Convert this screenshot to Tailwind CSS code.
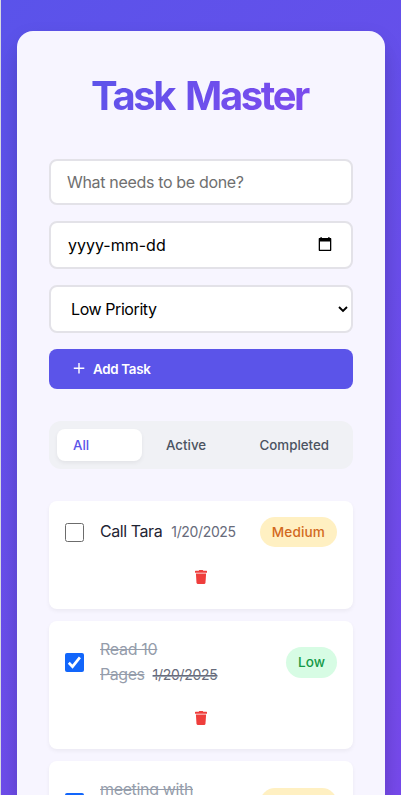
<!DOCTYPE html>
<html lang="en">
<head>
<meta charset="utf-8">
<title>Task Master</title>
<script src="https://cdn.jsdelivr.net/npm/@tailwindcss/browser@4"></script>
</head>
<body class="h-[795px] overflow-hidden border-l border-[#d5d8e0] bg-[linear-gradient(135deg,#5a53ea_0%,#774aeb_100%)] px-4 pt-[31px] font-['Inter','Liberation_Sans',sans-serif] text-base text-[#1f2433]">
<main class="h-[764px] w-[368px] overflow-hidden rounded-t-2xl bg-[#f7f5ff] px-8 pt-8 shadow-[0_20px_25px_-5px_rgba(0,0,0,0.12),0_8px_20px_rgba(0,0,0,0.1)]">
  <h1 class="flex h-16 items-center justify-center whitespace-nowrap pt-[2px] text-[40px] font-bold tracking-[-2.4px]"><span class="bg-[linear-gradient(135deg,#5b54ea,#7f4aee)] bg-clip-text pr-[3px] text-transparent [word-spacing:4px]">Task Master</span></h1>

  <form class="mt-8 flex flex-col gap-4">
    <div class="flex h-[46px] items-center rounded-lg border-2 border-[#e3e2e8] bg-white px-4 tracking-[-0.33px] text-[#6f6f6f]">What needs to be done?</div>
    <div class="flex h-12 items-center justify-between rounded-lg border-2 border-[#e3e2e8] bg-white pr-[19px] pl-[17px] text-black">
      <span>yyyy-mm-dd</span>
      <svg class="-mt-[2px] h-[14px] w-[14px]" viewBox="0 0 14 14"><path fill="#000" fill-rule="evenodd" d="M2.500 0h1.200v1h6.600V0h1.200v1h.8c.7 0 1 .4 1 1v10.800c0 .8-.3 1.200-1 1.200H1.700c-.7 0-1-.4-1-1.200V2c0-.6.3-1 1-1h.8zM2 4.500v8.200h10V4.500z"/></svg>
    </div>
    <div class="flex h-12 items-center justify-between rounded-lg border-2 border-[#e3e2e8] bg-white pr-[3px] pl-5 text-black">
      <span class="tracking-[-0.42px]">Low Priority</span>
      <svg class="h-[10px] w-[10px]" viewBox="0 0 10 10"><path d="M1 3l4 4 4-4" fill="none" stroke="#000" stroke-width="1.900"/></svg>
    </div>
    <button type="button" class="flex h-10 items-center gap-2 rounded-lg bg-[#5b54e9] pt-px pl-6 text-[13.333px] font-semibold tracking-[-0.3px] text-white">
      <svg class="-mt-[4px] h-3 w-3" viewBox="0 0 12 12"><path d="M6 1v10.500M.800 6.200h10.500" fill="none" stroke="#fff" stroke-width="1.400"/></svg>
      Add Task
    </button>
  </form>

  <nav class="mt-8 flex h-12 gap-2 rounded-xl bg-[#f0f1f5] p-2 text-[13.333px] font-medium text-[#4b5361]">
    <div class="flex w-[85px] items-center rounded-lg bg-white pt-[2px] pl-4 text-[#5b54e9] shadow-[0_2px_4px_rgba(0,0,0,0.06)]">All</div>
    <div class="flex w-[85px] items-center pt-[2px] pl-4">Active</div>
    <div class="flex items-center pt-[2px] pl-[16.500px]">Completed</div>
  </nav>

  <ul class="mt-8 flex flex-col gap-3">
    <li class="h-[108px] shrink-0 rounded-lg bg-white px-4 pt-4 shadow-[0_2px_4px_rgba(0,0,0,0.05)]">
      <div class="flex h-[30px] items-center">
        <span class="h-[19px] w-[19px] shrink-0 rounded-[2.500px] border border-[#6c6c6c] bg-white"></span>
        <p class="-mt-[2px] ml-4 flex-1 leading-[25px] tracking-[-0.42px]">Call Tara<span class="ml-[9px] text-sm tracking-[-0.35px] text-[#676b7b]">1/20/2025</span></p>
        <span class="flex h-[30px] items-center rounded-full bg-[#fff0c2] px-3 text-[13.600px] font-medium tracking-[0.13px] text-[#d2691e]">Medium</span>
      </div>
      <svg class="mx-auto mt-[23px] h-[14px] w-3" viewBox="0 0 12 14"><path fill="#ef3e3c" d="M4.200 0h3.600l.5.8h3.200q.5 0 .5.500v1.500H0V1.300q0-.5.5-.5h3.200z"/><path fill="#ef3e3c" d="M.9 3.400h10.200l-.6 9.100q-.1 1.500-1.500 1.500H3q-1.400 0-1.500-1.500z"/></svg>
    </li>
    <li class="h-32 shrink-0 rounded-lg bg-white px-4 pt-4 shadow-[0_2px_4px_rgba(0,0,0,0.05)]">
      <div class="flex h-[51px] items-center">
        <svg class="h-[19px] w-[19px] shrink-0" viewBox="0 0 19 19"><rect width="19" height="19" rx="2" fill="#1266fb"/><path d="M3.800 9.800l3.700 3.800 7.400-9.300" fill="none" stroke="#fff" stroke-width="2.700"/></svg>
        <p class="-mt-[2px] ml-4 flex-1 leading-[25px] tracking-[-0.3px] text-[#959dab] line-through">Read 10<br><span class="tracking-[-0.45px]">Pages</span><span class="ml-2 text-sm tracking-[-0.3px] text-[#676b7b] line-through">1/20/2025</span></p>
        <span class="flex h-[31px] items-center rounded-full bg-[#d7fce4] px-3 text-[13.600px] font-medium text-[#149a47]">Low</span>
      </div>
      <svg class="mx-auto mt-[23px] h-[14px] w-3" viewBox="0 0 12 14"><path fill="#ef3e3c" d="M4.200 0h3.600l.5.8h3.200q.5 0 .5.500v1.500H0V1.300q0-.5.5-.5h3.200z"/><path fill="#ef3e3c" d="M.9 3.400h10.200l-.6 9.100q-.1 1.500-1.500 1.500H3q-1.400 0-1.500-1.500z"/></svg>
    </li>
    <li class="h-32 shrink-0 rounded-lg bg-white px-4 pt-4 shadow-[0_2px_4px_rgba(0,0,0,0.05)]">
      <div class="flex h-[51px] items-center">
        <svg class="h-[19px] w-[19px] shrink-0" viewBox="0 0 19 19"><rect width="19" height="19" rx="2" fill="#1266fb"/><path d="M3.800 9.800l3.700 3.800 7.400-9.300" fill="none" stroke="#fff" stroke-width="2.700"/></svg>
        <p class="-mt-[2px] ml-4 flex-1 leading-[25px] tracking-[-0.35px] text-[#959dab] line-through">meeting with<br>&nbsp;</p>
        <span class="flex h-[30px] items-center rounded-full bg-[#fff0c2] px-3 text-[13.600px] font-medium tracking-[0.13px] text-[#d2691e]">Medium</span>
      </div>
    </li>
  </ul>
</main>
</body>
</html>
